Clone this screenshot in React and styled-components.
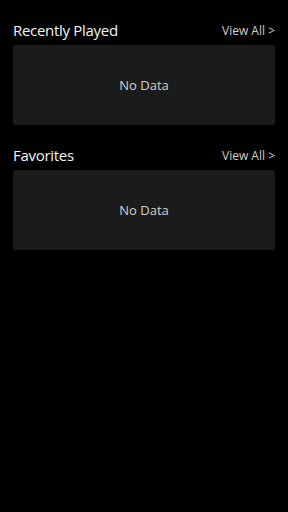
import styled, { createGlobalStyle } from "styled-components";

const Global = createGlobalStyle`
  html, body {
    margin: 0;
    padding: 0;
    background: #000;
  }
  body {
    font-family: "Open Sans", "Noto Sans", sans-serif;
    color: #fff;
  }
`

const Page = styled.div`
  width: 288px;
  min-height: 512px;
  background: #000;
  padding: 20px 13px 0 13px;
  box-sizing: border-box;
  display: flex;
  flex-direction: column;
  gap: 20px;
`

const Section = styled.section`
  display: flex;
  flex-direction: column;
  gap: 5px;
`

const Header = styled.div`
  display: flex;
  justify-content: space-between;
  align-items: center;
  height: 20px;
`

const Title = styled.h2`
  margin: 0;
  font-size: 15px;
  font-weight: 500;
  color: #f4f4f4;
  letter-spacing: -0.3px;
`

const ViewAll = styled.span`
  font-size: 12px;
  color: #cfcfcf;
  cursor: pointer;
`

const Card = styled.div`
  height: 80px;
  background: #1b1b1b;
  border-radius: 2px;
  display: flex;
  align-items: center;
  justify-content: center;
  font-size: 13px;
  color: #d0d0d0;
`

const Block = ({ title }) => (
  <Section>
    <Header>
      <Title>{title}</Title>
      <ViewAll>View All &gt;</ViewAll>
    </Header>
    <Card>No Data</Card>
  </Section>
)

const App = () => {
  return (
    <>
      <Global />
      <Page>
        <Block title="Recently Played" />
        <Block title="Favorites" />
      </Page>
    </>
  )
}

export default App;
